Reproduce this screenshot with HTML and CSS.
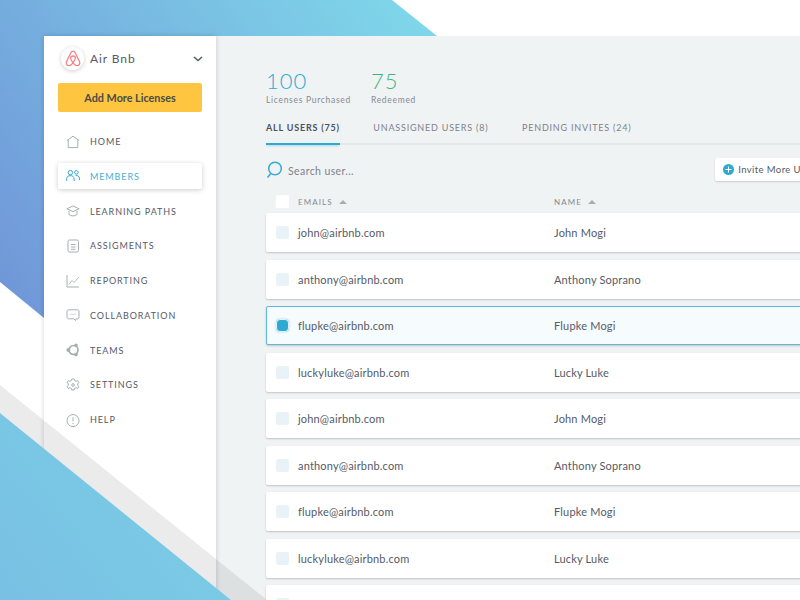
FILE: index.html
```html
<!DOCTYPE html>
<html lang="en">
<head>
<meta charset="utf-8">
<title>Members</title>
<link rel="stylesheet" href="styles.css">
</head>
<body>
<svg class="decor decor-back" width="800" height="600" viewBox="0 0 800 600">
  <defs><linearGradient id="gt" x1="0" y1="300" x2="420" y2="0" gradientUnits="userSpaceOnUse"><stop offset="0" stop-color="#7096d8"/><stop offset="1" stop-color="#7fd8ea"/></linearGradient></defs>
  <polygon points="0,0 392,0 437,36 437,60 44,318 0,282" fill="url(#gt)"/>
</svg>
<div class="app">
  <aside class="sidebar">
    <div class="account">
      <span class="logo"><svg width="16" height="17" viewBox="0 0 16 17" fill="none" stroke="#f4858a" stroke-width="1.3"><path d="M8 1.2C6.8 1.2 6.2 2 5.6 3.3L1.6 11.4C.6 13.6 1.8 15.6 3.8 15.6 5.4 15.6 6.8 14.4 8 12.8 9.2 14.4 10.6 15.6 12.2 15.6 14.2 15.6 15.4 13.6 14.4 11.4L10.4 3.3C9.8 2 9.2 1.2 8 1.2Z"/><path d="M8 12.8C6.6 11 5.6 9.4 5.6 8 5.6 6.8 6.6 6 8 6 9.4 6 10.4 6.8 10.4 8 10.4 9.4 9.4 11 8 12.8Z"/></svg></span>
      <span class="account-name">Air Bnb</span>
      <svg class="chevron" width="10" height="6" viewBox="0 0 10 6" fill="none" stroke="#555b66" stroke-width="1.5"><path d="M1 1l4 3.6L9 1"/></svg>
    </div>
    <button class="add-btn">Add More Licenses</button>
    <nav class="nav">
      <a class="nav-item"><svg class="nav-icon" viewBox="0 0 14 14" fill="none" stroke="#a9adb3"><path d="M.8 5.6L7 1.2l6.2 4.4M2.2 5v7.6h9.6V5"/></svg>HOME</a>
      <a class="nav-item active"><svg class="nav-icon" viewBox="0 0 14 14" fill="none" stroke="#35aad3"><circle cx="4.4" cy="3.6" r="2.2"/><circle cx="10.4" cy="3.4" r="1.8"/><path d="M.7 12v-2.2c0-2 1.6-3.2 3.7-3.2s3.700 1.200 3.700 3.200V12M9.600 6.600c2.200-.4 3.900.8 3.900 2.900V11"/></svg>MEMBERS</a>
      <a class="nav-item"><svg class="nav-icon" viewBox="0 0 14 14" fill="none" stroke="#a9adb3"><path d="M7 2L.8 4.800 7 7.600l6.200-2.800zM3 7v3.400c2.400 2 5.600 2 8 0V7"/></svg>LEARNING PATHS</a>
      <a class="nav-item"><svg class="nav-icon" viewBox="0 0 14 14" fill="none" stroke="#a9adb3"><rect x="2" y="1" width="10.500" height="12" rx="1.500"/><path d="M5 5.500h4.500M5 8h4.500M5 10.300h4.500"/></svg>ASSIGMENTS</a>
      <a class="nav-item"><svg class="nav-icon" viewBox="0 0 14 14" fill="none" stroke="#a9adb3"><path d="M1 1v12h12"/><path d="M3 10.500l3-4 2 2 5-5.500" stroke-width=".8"/></svg>REPORTING</a>
      <a class="nav-item"><svg class="nav-icon" viewBox="0 0 14 14" fill="none" stroke="#a9adb3"><path d="M2.500 1.800h9c.8 0 1.500.7 1.500 1.500v6c0 .8-.7 1.500-1.500 1.500h-1.500l-.5 1.700-1.700-1.700H2.500c-.8 0-1.500-.7-1.500-1.500v-6c0-.8.700-1.500 1.500-1.500z"/><path d="M4.500 6.300h1M6.500 6.300h1M8.500 6.300h1"/></svg>COLLABORATION</a>
      <a class="nav-item"><svg class="nav-icon" viewBox="0 0 14 14" fill="#a9adb3" stroke="none"><circle cx="7.500" cy="7" r="4.500" fill="none" stroke="#a9adb3" stroke-width="1.700"/><circle cx="2.400" cy="7" r="2"/><circle cx="10" cy="2.400" r="1.800"/><circle cx="10" cy="11.600" r="1.800"/></svg>TEAMS</a>
      <a class="nav-item"><svg class="nav-icon" viewBox="0 0 14 14" fill="none" stroke="#a9adb3"><path d="M5.800 1h2.400l.4 1.600 1.500.7 1.500-.8 1.300 2-1.200 1.100v1.800l1.200 1.100-1.300 2-1.500-.8-1.500.7-.4 1.600H5.800l-.4-1.600-1.500-.7-1.500.8-1.300-2 1.200-1.100V5.600L1.100 4.500l1.300-2 1.500.8 1.500-.7z"/><circle cx="7" cy="7" r="1.300"/></svg>SETTINGS</a>
      <a class="nav-item"><svg class="nav-icon" viewBox="0 0 14 14" fill="none" stroke="#a9adb3"><circle cx="7" cy="7.600" r="6"/><path d="M7 4.300v4M7 9.800v1.200"/></svg>HELP</a>
    </nav>
  </aside>
  <main class="main">
    <div class="content">
      <div class="stats">
        <div class="stat"><div class="stat-num blue">100</div><div class="stat-label">Licenses Purchased</div></div>
        <div class="stat"><div class="stat-num green">75</div><div class="stat-label">Redeemed</div></div>
      </div>
      <div class="tabs">
        <span class="tab current">ALL USERS (75)</span>
        <span class="tab">UNASSIGNED USERS (8)</span>
        <span class="tab">PENDING INVITES (24)</span>
      </div>
      <div class="toolbar">
        <div class="search">
          <svg width="17" height="18" viewBox="0 0 17 18" fill="none" stroke="#35aad3" stroke-width="1.500"><circle cx="9" cy="7.500" r="6.300"/><path d="M4.800 12.500L1.500 16.500"/></svg>
          <span class="search-text">Search user...</span>
        </div>
        <button class="invite"><svg width="11" height="11" viewBox="0 0 11 11"><circle cx="5.500" cy="5.500" r="5.500" fill="#2ea9d0"/><path d="M5.500 2.500v6M2.500 5.500h6" stroke="#fff"/></svg>Invite More Users</button>
      </div>
      <div class="table-head">
        <span class="head-check"></span>
        <span class="col-email head-label">EMAILS<i class="caret"></i></span>
        <span class="head-label">NAME<i class="caret"></i></span>
      </div>
      <div class="row"><span class="check"></span><span class="col-email">john@airbnb.com</span><span>John Mogi</span></div>
      <div class="row"><span class="check"></span><span class="col-email">anthony@airbnb.com</span><span>Anthony Soprano</span></div>
      <div class="row selected"><span class="check"></span><span class="col-email">flupke@airbnb.com</span><span>Flupke Mogi</span></div>
      <div class="row"><span class="check"></span><span class="col-email">luckyluke@airbnb.com</span><span>Lucky Luke</span></div>
      <div class="row"><span class="check"></span><span class="col-email">john@airbnb.com</span><span>John Mogi</span></div>
      <div class="row"><span class="check"></span><span class="col-email">anthony@airbnb.com</span><span>Anthony Soprano</span></div>
      <div class="row"><span class="check"></span><span class="col-email">flupke@airbnb.com</span><span>Flupke Mogi</span></div>
      <div class="row"><span class="check"></span><span class="col-email">luckyluke@airbnb.com</span><span>Lucky Luke</span></div>
      <div class="row"><span class="check"></span></div>
    </div>
  </main>
</div>
<svg class="decor decor-front" width="800" height="600" viewBox="0 0 800 600">
  <defs><linearGradient id="gb" x1="0" y1="600" x2="200" y2="450" gradientUnits="userSpaceOnUse"><stop offset="0" stop-color="#79c0e4"/><stop offset="1" stop-color="#7bcde5"/></linearGradient></defs>
  <polygon points="0,385 267,600 231,600 0,413" fill="#000" fill-opacity=".08"/>
  <polygon points="0,413 231,600 0,600" fill="url(#gb)"/>
</svg>
</body>
</html>
```
FILE: styles.css
```css
* { box-sizing: border-box; }
html, body { margin: 0; height: 100%; }
body {
  position: relative;
  width: 800px;
  height: 600px;
  overflow: hidden;
  background: #fff;
  font-family: Lato, "Liberation Sans", sans-serif;
  color: #4c515e;
}
.decor { position: absolute; left: 0; top: 0; pointer-events: none; }
.decor-front { z-index: 3; }

.app {
  position: relative;
  z-index: 1;
  display: flex;
  height: 564px;
  margin: 36px 0 0 44px;
}

.sidebar {
  flex: 0 0 172px;
  padding: 11px 14px 0;
  background: #fff;
  box-shadow: 0 0 5px rgba(0, 0, 0, .18);
  z-index: 1;
}
.account { display: flex; align-items: center; height: 23px; padding-left: 3px; }
.logo {
  display: flex;
  align-items: center;
  justify-content: center;
  width: 23px;
  height: 23px;
  border-radius: 50%;
  background: #fff;
  box-shadow: 0 1px 4px rgba(0, 0, 0, .2);
}
.account-name { margin-left: 6px; font-size: 12px; letter-spacing: .9px; color: #555a66; }
.chevron { margin-left: auto; margin-right: -1px; }

.add-btn {
  display: block;
  width: 144px;
  height: 29px;
  margin-top: 13px;
  border: 0;
  border-radius: 2px;
  background: #fec640;
  font: 700 10.800px Lato, sans-serif;
  color: #4c4b49;
}

.nav { margin-top: 16.500px; display: flex; flex-direction: column; gap: 8.750px; }
.nav-item {
  display: flex;
  align-items: center;
  height: 26px;
  padding-left: 8px;
  border-radius: 2px;
  font-size: 9px;
  letter-spacing: .900px;
  color: #555a66;
}
.nav-item.active {
  background: #fff;
  color: #3fb0d6;
  box-shadow: 0 1px 5px rgba(0, 0, 0, .2);
}
.nav-icon { width: 14px; height: 14px; margin-right: 10px; flex: none; stroke-width: 1; }

.main { flex: 1; min-width: 0; padding: 0 0 0 50px; background: #f0f3f4; overflow: hidden; }
.content { width: 561px; }

.stats { display: flex; gap: 20px; padding-top: 33px; }
.stat-num { font-size: 22px; font-weight: 300; line-height: 24px; letter-spacing: 1px; }
.blue { color: #2eaad1; }
.green { color: #3fb37f; }
.stat-label { margin-top: 2px; font-size: 8.500px; line-height: 11px; letter-spacing: .700px; color: #858a93; }

.tabs {
  display: flex;
  gap: 33.500px;
  height: 28px;
  margin-top: 11px;
  width: 800px;
  border-bottom: 2px solid #e4e8ea;
}
.tab {
  height: 28px;
  padding-top: 3.500px;
  font-size: 9px;
  line-height: 13px;
  letter-spacing: .800px;
  color: #7d828b;
}
.tab.current {
  font-weight: 700;
  color: #4c515e;
  border-bottom: 2px solid #2eaad1;
  box-shadow: 0 2px 2px -1px rgba(46, 170, 209, .35);
}

.toolbar { display: flex; align-items: center; justify-content: space-between; height: 23px; margin-top: 13px; }
.search { display: flex; align-items: center; gap: 5px; }
.search-text { font-size: 10.500px; letter-spacing: .400px; color: #7d828b; margin-top: 3px; }
.invite {
  display: flex;
  align-items: center;
  gap: 4px;
  height: 23px;
  padding: 0 8px;
  border: 0;
  border-radius: 2px;
  background: #fff;
  box-shadow: 0 1px 2px rgba(0, 0, 0, .16);
  font: 400 9.500px Lato, sans-serif;
  letter-spacing: .400px;
  color: #555a66;
  white-space: nowrap;
}

.table-head { display: flex; align-items: center; height: 13px; margin-top: 14px; padding-left: 10px; }
.head-check { flex: none; width: 13px; height: 13px; margin-right: 9px; background: #fff; border-radius: 1px; }
.head-label { font-size: 8px; letter-spacing: 1.100px; color: #858a93; display: flex; align-items: center; }
.caret {
  width: 0;
  height: 0;
  margin-left: 6px;
  border: 4px solid transparent;
  border-top: 0;
  border-bottom: 4px solid #a9adb3;
}
.col-email { flex: 0 0 256px; }

.row {
  display: flex;
  align-items: center;
  height: 39px;
  margin-top: 5.400px;
  margin-bottom: 7.500px;
  padding-left: 10px;
  background: #fff;
  border-radius: 2px;
  box-shadow: 0 1px 2px rgba(0, 0, 0, .2);
  font-size: 11px;
  letter-spacing: .180px;
  color: #555a66;
}
.row + .row { margin-top: 0; }
.check { flex: none; width: 13px; height: 13px; margin-right: 9px; border-radius: 2px; background: #e9f3f7; }
.row.selected {
  background: #f6fbfe;
  border: 1px solid #5fb9d9;
  padding-left: 9px;
}
.row.selected .check {
  background: #2ea9d0;
  border-radius: 4px;
  border: 1px solid #e3f2f8;
  box-shadow: 0 0 2px rgba(46, 169, 208, .5);
}
```
